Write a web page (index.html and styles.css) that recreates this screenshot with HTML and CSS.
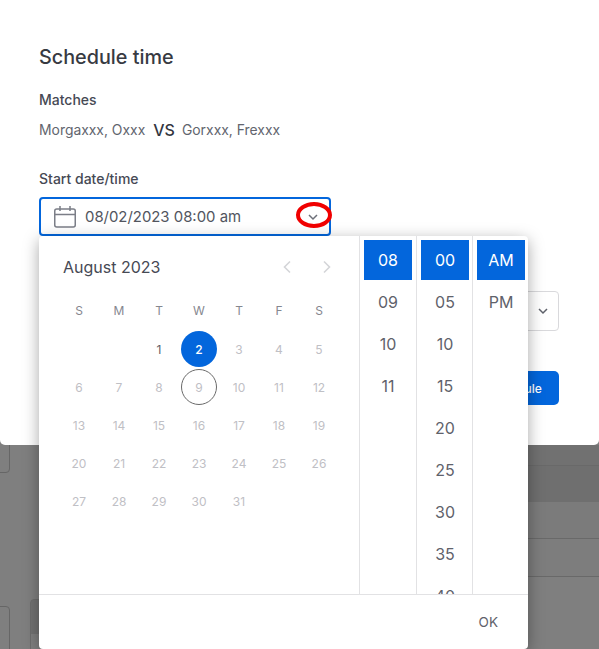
FILE: index.html
```html
<!DOCTYPE html>
<html lang="en">
<head>
<meta charset="utf-8">
<title>Schedule time</title>
<link rel="stylesheet" href="styles.css">
</head>
<body>
<div class="page">
  <section class="modal">
    <h1 class="title">Schedule time</h1>
    <div class="label">Matches</div>
    <div class="matches"><span>Morgaxxx, Oxxx</span><b class="vs">VS</b><span>Gorxxx, Frexxx</span></div>
    <div class="label label-start">Start date/time</div>
    <div class="field">
      <svg class="cal-icon" width="24" height="24" viewBox="0 0 24 24" fill="none" stroke="#7b7e87" stroke-width="1.5"><rect x="1.75" y="4" width="20.5" height="18" rx="2"/><path d="M2 9.5h20M7 1v5M17 1v5"/></svg>
      <span class="field-text">08/02/2023 08:00 am</span>
      <svg class="chev" width="12" height="8" viewBox="0 0 12 8" fill="none" stroke="#6d7079" stroke-width="1.5"><path d="M2 2l4 4 4-4"/></svg>
    </div>
    <div class="select">
      <svg class="chev" width="12" height="8" viewBox="0 0 12 8" fill="none" stroke="#5f626b" stroke-width="1.5"><path d="M2 2l4 4 4-4"/></svg>
    </div>
    <div class="actions"><button class="primary">Schedule</button></div>
  </section>

  <section class="under">
    <div class="band band-a"></div>
    <div class="band band-b"></div>
    <div class="band band-c"></div>
    <div class="band band-d"></div>
    <div class="band band-e"></div>
    <div class="ghost ghost-1"></div>
    <div class="ghost ghost-2"></div>
    <div class="ghost ghost-3"></div>
  </section>

  <div class="ring"></div>

  <div class="picker">
    <div class="picker-main">
      <div class="calendar">
        <div class="cal-head">
          <span class="month">August 2023</span>
          <span class="nav">
            <svg width="10" height="14" viewBox="0 0 10 14" fill="none" stroke="#d4d5d8" stroke-width="1.6"><path d="M8 1.5L2.5 7 8 12.5"/></svg>
            <svg width="10" height="14" viewBox="0 0 10 14" fill="none" stroke="#d4d5d8" stroke-width="1.6"><path d="M2 1.5L7.5 7 2 12.5"/></svg>
          </span>
        </div>
        <div class="weekdays"><span>S</span><span>M</span><span>T</span><span>W</span><span>T</span><span>F</span><span>S</span></div>
        <div class="days">
          <span></span><span></span><span class="on">1</span><span class="sel">2</span><span>3</span><span>4</span><span>5</span>
          <span>6</span><span>7</span><span>8</span><span class="today">9</span><span>10</span><span>11</span><span>12</span>
          <span>13</span><span>14</span><span>15</span><span>16</span><span>17</span><span>18</span><span>19</span>
          <span>20</span><span>21</span><span>22</span><span>23</span><span>24</span><span>25</span><span>26</span>
          <span>27</span><span>28</span><span>29</span><span>30</span><span>31</span>
        </div>
      </div>
      <ul class="col col-h">
        <li class="active">08</li><li>09</li><li>10</li><li>11</li>
      </ul>
      <ul class="col col-m">
        <li class="active">00</li><li>05</li><li>10</li><li>15</li><li>20</li><li>25</li><li>30</li><li>35</li><li>40</li>
      </ul>
      <ul class="col col-a">
        <li class="active">AM</li><li>PM</li>
      </ul>
    </div>
    <div class="picker-foot"><span class="ok">OK</span></div>
  </div>
</div>
</body>
</html>
```
FILE: styles.css
```css
* { box-sizing: border-box; }
html, body { margin: 0; padding: 0; }
body { font-family: Inter, "Liberation Sans", sans-serif; color: #33363f; background: #7f7f7f; }
.page { position: relative; width: 599px; height: 649px; overflow: hidden; }

.modal { height: 445px; background: #fff; border-radius: 0 0 5px 5px; padding: 45px 40px 0 39px; position: relative; z-index: 1; }
.title { margin: 0; font-size: 19.8px; line-height: 24px; font-weight: 500; color: #373a42; }
.label { margin-top: 22px; font-size: 14px; line-height: 18px; font-weight: 500; color: #464954; }
.matches { display: flex; align-items: center; margin-top: 9px; height: 24px; font-size: 13.9px; color: #62656e; }
.vs { margin: 0 7px 0 8px; font-size: 16px; font-weight: 500; color: #33363f; }
.label.label-start { margin-top: 28px; }
.field { display: flex; align-items: center; margin-top: 9px; width: 292px; height: 39px; border: 2px solid #0366dc; border-radius: 4px; padding: 0 10px 0 12px; }
.cal-icon { flex: none; }
.field-text { margin-left: 8px; font-size: 14.9px; color: #52555e; flex: 1; }
.select { display: flex; align-items: center; justify-content: flex-end; margin-top: 55px; height: 40px; border: 1px solid #d9d9dc; border-radius: 4px; padding-right: 9px; }
.actions { display: flex; justify-content: flex-end; margin-top: 40px; }
.primary { width: 88px; height: 34px; border: 0; border-radius: 5px; background: #0366dc; color: #fff; font: 500 12px Inter, "Liberation Sans", sans-serif; padding: 0; }

.under { height: 204px; display: flex; flex-direction: column; position: relative; background: #7f7f7f; }
.band { margin-left: 300px; border-bottom: 1px solid #696969; }
.band-a { height: 21px; background: #717171; }
.band-b { height: 36px; background: #6f6f6f; border-bottom: 0; }
.band-c { height: 37px; background: #7b7b7b; }
.band-d { height: 38px; background: #7d7d7d; }
.band-e { flex: 1; background: #7f7f7f; border-bottom: 0; }
.ghost { position: absolute; border: 1px solid #666; border-radius: 4px; background: #7f7f7f; }
.ghost-1 { left: -20px; top: -10px; width: 30px; height: 38px; }
.ghost-2 { left: -20px; top: 161px; width: 30px; height: 70px; }
.ghost-3 { left: 30px; top: 154px; width: 30px; height: 70px; border-color: #6d6d6d; background: linear-gradient(#727272 0 34px, #7f7f7f 34px); }

.ring { position: absolute; z-index: 3; left: 296px; top: 202px; width: 36px; height: 26px; border: 4px solid #f00000; border-radius: 50%; }

.picker { position: absolute; z-index: 2; left: 39px; top: 236px; width: 489px; height: 413px; background: #fff; border-radius: 4px; box-shadow: 0 4px 16px rgba(0,0,0,.35); display: flex; flex-direction: column; }
.picker-main { display: flex; height: 359px; border-bottom: 1px solid #e2e2e4; }
.calendar { width: 321px; flex: none; padding: 0 20px; border-right: 1px solid #e2e2e4; }
.cal-head { display: flex; align-items: center; justify-content: space-between; height: 62px; padding: 0 7px 0 4px; }
.month { font-size: 16px; color: #464954; }
.nav { display: flex; gap: 30px; }
.weekdays, .days { display: grid; grid-template-columns: repeat(7, 40px); justify-items: center; align-items: center; }
.weekdays { height: 24px; font-size: 12px; color: #85878f; }
.days { margin-top: 8px; grid-auto-rows: 38px; font-size: 12px; color: #bfc0c5; }
.days span { display: flex; align-items: center; justify-content: center; width: 36px; height: 36px; border-radius: 50%; }
.days .on { color: #5d6067; }
.days .sel { background: #0366dc; color: #fff; font-weight: 500; }
.days .today { border: 1px solid #6a6a6a; }

.col { list-style: none; margin: 0; padding: 4px; overflow: hidden; border-right: 1px solid #e2e2e4; font-size: 16px; color: #5f626b; flex: none; }
.col-h { width: 57px; }
.col-m { width: 56px; padding-right: 3px; }
.col-a { width: 55px; padding-right: 3px; border-right: 0; }
.col li { height: 40px; margin-bottom: 2px; display: flex; align-items: center; justify-content: center; }
.col .active { background: #0366dc; color: #fff; }

.picker-foot { flex: 1; display: flex; align-items: center; justify-content: flex-end; padding: 0 30px 0 0; }
.ok { font-size: 13.5px; color: #5f626b; }
```
